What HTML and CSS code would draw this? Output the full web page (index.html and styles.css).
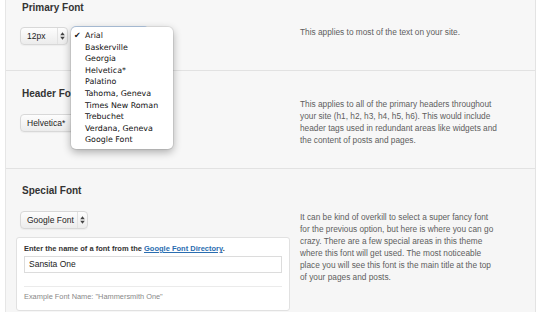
FILE: index.html
```html
<!DOCTYPE html>
<html>
<head>
<meta charset="utf-8">
<title>Font settings</title>
<link rel="stylesheet" href="styles.css">
</head>
<body>
<div class="panel">
  <section class="row row--primary">
    <div class="field">
      <h3 class="field__title">Primary Font</h3>
      <div class="controls">
        <div class="select select--size">
          <span class="select__label">12px</span>
          <span class="select__arrow"><svg width="5" height="8" viewBox="0 0 5 8"><path d="M2.5 0.3L4.8 3.2H0.2Z M2.5 7.7L4.8 4.8H0.2Z" fill="#444"/></svg></span>
        </div>
        <div class="picker">
          <div class="select select--font select--focus">
            <span class="select__label"></span>
            <span class="select__arrow"><svg width="5" height="8" viewBox="0 0 5 8"><path d="M2.5 0.3L4.8 3.2H0.2Z M2.5 7.7L4.8 4.8H0.2Z" fill="#444"/></svg></span>
          </div>
          <ul class="menu">
            <li class="menu__item menu__item--checked">Arial</li>
            <li class="menu__item">Baskerville</li>
            <li class="menu__item">Georgia</li>
            <li class="menu__item">Helvetica*</li>
            <li class="menu__item">Palatino</li>
            <li class="menu__item">Tahoma, Geneva</li>
            <li class="menu__item">Times New Roman</li>
            <li class="menu__item">Trebuchet</li>
            <li class="menu__item">Verdana, Geneva</li>
            <li class="menu__item">Google Font</li>
          </ul>
        </div>
      </div>
    </div>
    <p class="desc desc--primary">This applies to most of the text on your site.</p>
  </section>

  <section class="row row--header">
    <div class="field">
      <h3 class="field__title">Header Font</h3>
      <div class="controls">
        <div class="select select--header">
          <span class="select__label">Helvetica*</span>
          <span class="select__arrow"><svg width="5" height="8" viewBox="0 0 5 8"><path d="M2.5 0.3L4.8 3.2H0.2Z M2.5 7.7L4.8 4.8H0.2Z" fill="#444"/></svg></span>
        </div>
      </div>
    </div>
    <p class="desc desc--header">This applies to all of the primary headers throughout your site (h1, h2, h3, h4, h5, h6). This would include header tags used in redundant areas like widgets and the content of posts and pages.</p>
  </section>

  <section class="row row--special">
    <div class="field">
      <h3 class="field__title">Special Font</h3>
      <div class="controls">
        <div class="select select--google">
          <span class="select__label">Google Font</span>
          <span class="select__arrow"><svg width="5" height="8" viewBox="0 0 5 8"><path d="M2.5 0.3L4.8 3.2H0.2Z M2.5 7.7L4.8 4.8H0.2Z" fill="#444"/></svg></span>
        </div>
      </div>
      <div class="gfont">
        <p class="gfont__label">Enter the name of a font from the <a class="gfont__link" href="#">Google Font Directory</a>.</p>
        <div class="gfont__input">Sansita One</div>
        <hr class="gfont__rule">
        <p class="gfont__example">Example Font Name: "Hammersmith One"</p>
      </div>
    </div>
    <p class="desc desc--special">It can be kind of overkill to select a super fancy font for the previous option, but here is where you can go crazy. There are a few special areas in this theme where this font will get used. The most noticeable place you will see this font is the main title at the top of your pages and posts.</p>
  </section>
</div>
</body>
</html>
```

FILE: styles.css
```css
* { box-sizing: border-box; }

html, body {
  margin: 0;
  padding: 0;
}

body {
  width: 542px;
  height: 312px;
  overflow: hidden;
  background: #ffffff;
  font-family: "Liberation Sans", Arial, Helvetica, sans-serif;
  color: #333;
}

.panel {
  margin-left: 5px;
  width: 531px;
  background: #f7f7f7;
  border-left: 1px solid #e6e6e6;
  border-right: 1px solid #e3e3e3;
}

.row {
  display: grid;
  grid-template-columns: 294px 1fr;
  align-items: start;
  border-bottom: 1px solid #e2e2e2;
}

.row--primary { height: 71px; padding-top: 1px; }
.row--header { height: 98px; padding-top: 16px; }
.row--special { padding-top: 15px; padding-bottom: 11px; background: #f6f6f6; }

.field {
  padding-left: 10px;
}

.field__title {
  margin: 0 0 0 6px;
  font-size: 10px;
  line-height: 14px;
  font-weight: bold;
  color: #333;
}

.controls {
  display: flex;
  gap: 4px;
  margin: 13px 0 0 4px;
}

.row--primary .controls { margin-top: 12px; }

.select {
  display: flex;
  align-items: center;
  height: 18px;
  border: 1px solid #d8d8d8;
  border-radius: 4px;
  background: linear-gradient(#fdfdfd, #ececec);
  box-shadow: 0 1px 1px rgba(0, 0, 0, 0.04);
  font-size: 8.5px;
  color: #222;
}

.select__label {
  flex: 1;
  padding-left: 6px;
  white-space: nowrap;
}

.select__arrow {
  display: flex;
  align-items: center;
  justify-content: center;
  width: 10px;
  height: 100%;
  border-left: 1px solid #e2e2e2;
}

.select--size { width: 48px; }
.select--font { width: 76px; }
.select--header { width: 76px; }
.select--google { width: 68px; }

.select--focus {
  border-color: #8fb4e4;
  box-shadow: 0 0 0 1px rgba(120, 170, 230, 0.45);
}

.picker {
  position: relative;
}

.menu {
  position: absolute;
  z-index: 10;
  left: -1px;
  top: 0;
  width: 102px;
  margin: 0;
  padding: 3px 0;
  list-style: none;
  background: #ffffff;
  border-radius: 5px;
  box-shadow: 0 3px 9px rgba(0, 0, 0, 0.32), 0 0 0 1px rgba(0, 0, 0, 0.07);
}

.menu__item {
  position: relative;
  padding-left: 14px;
  font-family: "DejaVu Sans", "Noto Sans", sans-serif;
  font-size: 7.9px;
  line-height: 11.6px;
  color: #111;
  white-space: nowrap;
}

.menu__item--checked::before {
  content: "\2714";
  position: absolute;
  left: 3px;
  top: 0;
  font-size: 8px;
  color: #111;
}

.desc {
  margin: 0;
  width: 200px;
  font-size: 8.3px;
  line-height: 12px;
  color: #5e5e5e;
}

.desc--primary { margin-top: 25px; }
.desc--header { margin-top: 11px; }
.desc--special { margin-top: 27px; }

.gfont {
  margin-top: 8px;
  width: 274px;
  padding: 6px 7px 8px;
  background: #ffffff;
  border: 1px solid #e1e1e1;
  border-radius: 3px;
}

.gfont__label {
  margin: 0;
  font-size: 7.5px;
  line-height: 10px;
  font-weight: bold;
  color: #333;
}

.gfont__link {
  color: #2a6db0;
  text-decoration: underline;
}

.gfont__input {
  margin-top: 2px;
  height: 17px;
  padding-left: 4px;
  border: 1px solid #dcdcdc;
  background: #ffffff;
  font-size: 8.5px;
  line-height: 15px;
  color: #222;
}

.gfont__rule {
  margin: 13px 0 0;
  border: 0;
  border-top: 1px solid #ebebeb;
}

.gfont__example {
  margin: 5px 0 0;
  font-size: 7.4px;
  line-height: 10px;
  color: #888;
}
```
